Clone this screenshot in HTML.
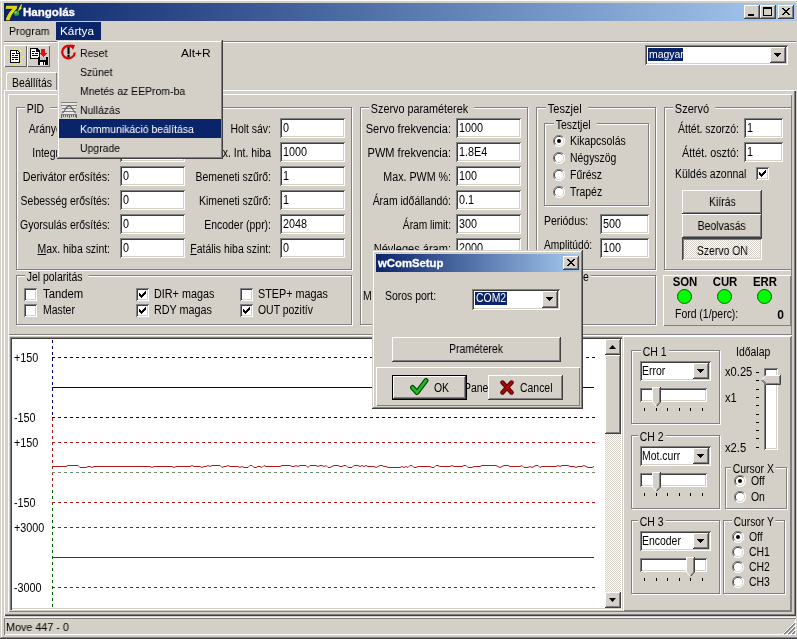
<!DOCTYPE html>
<html lang="hu"><head><meta charset="utf-8"><title>Hangolás</title>
<style>
html,body{margin:0;padding:0;}
body{width:797px;height:639px;overflow:hidden;background:#D4D0C8;position:relative;will-change:opacity;
 font-family:"Liberation Sans",sans-serif;font-size:12px;color:#000;line-height:13px;}
div,span{box-sizing:border-box;}
.a{position:absolute;}
.t{position:absolute;margin-top:1px;white-space:nowrap;height:13px;line-height:13px;font-size:12px;transform:scaleX(0.87);transform-origin:0 50%;}
.t.r{text-align:right;transform-origin:100% 50%;}
.t.c{text-align:center;transform-origin:50% 50%;}
.th{position:absolute;will-change:transform;white-space:nowrap;height:13px;line-height:13px;font-size:11px;transform:scaleX(0.95);transform-origin:0 50%;}
.b{font-weight:bold;}
.s{display:inline-block;will-change:transform;transform:scaleX(0.87);transform-origin:50% 50%;white-space:nowrap;}
.btn{background:#D4D0C8;box-shadow:inset -1px -1px #404040,inset 1px 1px #fff,inset -2px -2px #808080,inset 2px 2px #D4D0C8;text-align:center;}
.sunken{background:#fff;box-shadow:inset 1px 1px #808080,inset -1px -1px #fff,inset 2px 2px #404040,inset -2px -2px #D4D0C8;}
.edit{position:absolute;background:#fff;box-shadow:inset 1px 1px #808080,inset -1px -1px #fff,inset 2px 2px #404040,inset -2px -2px #D4D0C8;overflow:hidden;}
.edit span{position:absolute;left:3px;top:4px;height:13px;line-height:13px;white-space:nowrap;transform:scaleX(0.9);transform-origin:0 50%;}
.grp{position:absolute;border:1px solid #808080;box-shadow:1px 1px 0 #fff,inset 1px 1px 0 #fff;}
.gl{position:absolute;top:-5px;background:#D4D0C8;padding:0 7px 0 2px;white-space:nowrap;height:13px;line-height:13px;transform:scaleX(0.87);transform-origin:0 50%;}
.bevelup{box-shadow:inset 1px 1px #fff,inset -1px -1px #808080;}
.cb{position:absolute;width:13px;height:13px;background:#fff;box-shadow:inset 1px 1px #808080,inset -1px -1px #fff,inset 2px 2px #404040,inset -2px -2px #D4D0C8;}
.sel{background:#0A246A;color:#fff;}
</style></head>
<body>
<div class="a " style="left:0px;top:0px;width:797px;height:1px;background:#fff;"></div>
<div class="a " style="left:1px;top:0px;width:1px;height:638px;background:#fff;"></div>
<div class="a " style="left:0px;top:638px;width:797px;height:1px;background:#404040;"></div>
<div class="a " style="left:1px;top:637px;width:796px;height:1px;background:#808080;"></div>
<div class="a " style="left:4px;top:3px;width:792px;height:18px;background:linear-gradient(to right,#0A246A 0%,#A6CAF0 100%);"></div>
<svg class="a" style="left:4px;top:3px;will-change:transform" width="20" height="18" viewBox="4 3 20 18"><text x="4.500" y="19.500" font-family="Liberation Sans,sans-serif" font-size="21" font-weight="bold" font-style="italic" fill="#D8D818" stroke="#181800" stroke-width="2.200" paint-order="stroke" stroke-linejoin="round">7</text><text x="4.500" y="19.500" font-family="Liberation Sans,sans-serif" font-size="21" font-weight="bold" font-style="italic" fill="#D8D818" stroke="#D8D818" stroke-width="0.700">7</text><circle cx="16.500" cy="13.200" r="2.600" fill="#30A040"/><circle cx="15.800" cy="12.500" r="1" fill="#90D0A0"/><path d="M17.500 11.500l2.500-5.500 1.500-2 0.500 1-1 2.500 1 0.500-1.500 1.500z" fill="#E8E820"/></svg>
<div class="th b" style="left:23px;top:6px;transform:scaleX(1.05);color:#fff;-webkit-text-stroke:0.3px #fff;">Hangolás</div>
<div class="a btn" style="left:744px;top:5px;width:16px;height:14px;"><svg class="a" style="left:0;top:0" width="16" height="14" viewBox="0 0 16 14" shape-rendering="crispEdges"><path d="M4 9h6v2H4z" fill="#000"/></svg></div>
<div class="a btn" style="left:760px;top:5px;width:16px;height:14px;"><svg class="a" style="left:0;top:0" width="16" height="14" viewBox="0 0 16 14" shape-rendering="crispEdges"><path d="M3 2h9v9H3z M4 4v6h7V4z" fill="#000" fill-rule="evenodd"/></svg></div>
<div class="a btn" style="left:778px;top:5px;width:16px;height:14px;"><svg class="a" style="left:0;top:0" width="16" height="14" viewBox="0 0 16 14" shape-rendering="crispEdges"><path d="M4 3h2v1h1v1h2v-1h1v-1h2v1h-1v1h-1v1h-1v1h1v1h1v1h1v1h-2v-1h-1v-1h-2v1h-1v1h-2v-1h1v-1h1v-1h1v-1h-1v-1h-1v-1h-1z" fill="#000"/></svg></div>
<div class="th " style="left:9px;top:25px;transform:scaleX(0.96);">Program</div>
<div class="a sel" style="left:56px;top:22px;width:45px;height:18px;"></div>
<div class="th " style="left:60px;top:25px;transform:scaleX(1.07);color:#fff;">Kártya</div>
<div class="a " style="left:4px;top:41px;width:792px;height:1px;background:#808080;"></div>
<div class="a " style="left:4px;top:42px;width:792px;height:1px;background:#fff;"></div>
<div class="a" style="left:4px;top:45px;width:23px;height:22px;background:#D4D0C8;box-shadow:inset 1px 1px #fff,inset -1px -1px #606060;"><svg class="a" style="left:3px;top:3px" width="17" height="17" viewBox="0 0 17 17" shape-rendering="crispEdges"><path d="M2 2h2v2H2zM13 2h2v2h-2zM2 14h2v2H2zM13 14h2v2h-2zM0 8h2v2H0zM15 8h2v2h-2zM7 0h2v1H7zM7 16h2v1H7zM4 5h1v1H4zM13 11h1v1h-1z" fill="#F0F040"/><path d="M3 2h7l3 3v10H3z" fill="#000"/><path d="M4 3h5v3h3v8H4z" fill="#fff"/><path d="M10 3v2h2z" fill="#fff"/><path d="M5 5h3v1H5zM5 7h2v1H5zM8 7h3v1H8zM5 9h6v1H5zM5 11h2v1H5zM8 11h3v1H8z" fill="#000"/></svg></div>
<div class="a" style="left:27px;top:45px;width:23px;height:22px;background:#D4D0C8;box-shadow:inset 1px 1px #fff,inset -1px -1px #606060;"><svg class="a" style="left:2px;top:2px" width="20" height="19" viewBox="0 0 20 19" shape-rendering="crispEdges"><path d="M1 1h7l3 3v8H1z" fill="#000"/><path d="M2 2h5v3h3v6H2z" fill="#fff"/><path d="M3 4h3v1H3zM3 6h2v1H3zM6 6h3v1H6zM3 8h6v1H3z" fill="#000"/><path d="M12 2h4v4h2l-4 4-4-4h2z" fill="#E01010"/><path d="M9 10h10v8H9z" fill="#000"/><path d="M11 10h6v3h-6z" fill="#C0C0C0"/><path d="M11 15h5v3h-5z" fill="#fff"/><path d="M14 15h1v3h-1z" fill="#000"/></svg></div>
<div class="a sunken" style="left:645px;top:45px;width:143px;height:20px;"><div class="a sel" style="left:3px;top:3px;width:35px;height:13px;"><span class="a" style="left:1px;top:0;height:13px;line-height:13px;white-space:nowrap;font-size:11px;transform:scaleX(0.95);transform-origin:0 50%;">magyar</span></div><div class="a btn" style="left:125px;top:2px;width:16px;height:16px;"><svg class="a" style="left:4px;top:6px" width="7" height="4" viewBox="0 0 7 4" shape-rendering="crispEdges"><path d="M0 0h7v1h-1v1h-1v1h-1v1h-1v-1h-1v-1h-1v-1h-1z" fill="#000"/></svg></div></div>
<div class="a " style="left:4px;top:90px;width:792px;height:526px;box-shadow:inset 1px 1px #fff,inset -1px -1px #404040,inset -2px -2px #808080;"></div>
<div class="a " style="left:6px;top:72px;width:52px;height:18px;background:#D4D0C8;border-radius:2px 2px 0 0;box-shadow:inset 1px 1px #fff,inset -1px 0 #404040,inset -2px 0 #808080;"></div>
<div class="t " style="left:12px;top:76px;">Beállítás</div>
<div class="a bevelup" style="left:8px;top:94px;width:784px;height:241px;"></div>
<div class="a bevelup" style="left:8px;top:335px;width:784px;height:277px;"></div>
<div class="grp" style="left:16px;top:107px;width:336px;height:163px;"><span class="gl" style="left:8px;">PID</span></div>
<div class="t r" style="left:-10px;top:122px;width:120px;">Arányos erősítés:</div>
<div class="edit" style="left:120px;top:118px;width:65px;height:20px;"><span>0</span></div>
<div class="t r" style="left:-10px;top:146px;width:120px;">Integrál erősítés:</div>
<div class="edit" style="left:120px;top:142px;width:65px;height:20px;"><span>0</span></div>
<div class="t r" style="left:-10px;top:170px;width:120px;transform:scaleX(0.89);">Derivátor erősítés:</div>
<div class="edit" style="left:120px;top:166px;width:65px;height:20px;"><span>0</span></div>
<div class="t r" style="left:-10px;top:194px;width:120px;">Sebesség erősítés:</div>
<div class="edit" style="left:120px;top:190px;width:65px;height:20px;"><span>0</span></div>
<div class="t r" style="left:-10px;top:218px;width:120px;">Gyorsulás erősítés:</div>
<div class="edit" style="left:120px;top:214px;width:65px;height:20px;"><span>0</span></div>
<div class="t r" style="left:-10px;top:242px;width:120px;"><u>M</u>ax. hiba szint:</div>
<div class="edit" style="left:120px;top:238px;width:65px;height:20px;"><span>0</span></div>
<div class="t r" style="left:151px;top:122px;width:120px;">Holt sáv:</div>
<div class="edit" style="left:280px;top:118px;width:65px;height:20px;"><span>0</span></div>
<div class="t r" style="left:151px;top:146px;width:120px;">Max. Int. hiba</div>
<div class="edit" style="left:280px;top:142px;width:65px;height:20px;"><span>1000</span></div>
<div class="t r" style="left:151px;top:170px;width:120px;">Bemeneti szűrő:</div>
<div class="edit" style="left:280px;top:166px;width:65px;height:20px;"><span>1</span></div>
<div class="t r" style="left:151px;top:194px;width:120px;">Kimeneti szűrő:</div>
<div class="edit" style="left:280px;top:190px;width:65px;height:20px;"><span>1</span></div>
<div class="t r" style="left:151px;top:218px;width:120px;">Encoder (ppr):</div>
<div class="edit" style="left:280px;top:214px;width:65px;height:20px;"><span>2048</span></div>
<div class="t r" style="left:151px;top:242px;width:120px;"><u>F</u>atális hiba szint:</div>
<div class="edit" style="left:280px;top:238px;width:65px;height:20px;"><span>0</span></div>
<div class="grp" style="left:16px;top:275px;width:336px;height:50px;"><span class="gl" style="left:8px;">Jel polaritás</span></div>
<div class="cb" style="left:24px;top:288px;"></div>
<div class="t " style="left:43px;top:287px;transform:scaleX(0.94);">Tandem</div>
<div class="cb" style="left:24px;top:304px;"></div>
<div class="t " style="left:43px;top:303px;">Master</div>
<div class="cb" style="left:136px;top:288px;"><svg width="13" height="13" viewBox="0 0 13 13" style="position:absolute;left:0;top:0" shape-rendering="crispEdges"><path d="M3 5h1v1h1v1h1v-1h1v-1h1v-1h1v-1h1v3h-1v1h-1v1h-1v1h-1v1h-1v-1h-1v-1h-1z" fill="#000"/></svg></div>
<div class="t " style="left:154px;top:287px;transform:scaleX(0.9);">DIR+ magas</div>
<div class="cb" style="left:136px;top:304px;"><svg width="13" height="13" viewBox="0 0 13 13" style="position:absolute;left:0;top:0" shape-rendering="crispEdges"><path d="M3 5h1v1h1v1h1v-1h1v-1h1v-1h1v-1h1v3h-1v1h-1v1h-1v1h-1v1h-1v-1h-1v-1h-1z" fill="#000"/></svg></div>
<div class="t " style="left:154px;top:303px;transform:scaleX(0.9);">RDY magas</div>
<div class="cb" style="left:240px;top:288px;"></div>
<div class="t " style="left:258px;top:287px;transform:scaleX(0.9);">STEP+ magas</div>
<div class="cb" style="left:240px;top:304px;"><svg width="13" height="13" viewBox="0 0 13 13" style="position:absolute;left:0;top:0" shape-rendering="crispEdges"><path d="M3 5h1v1h1v1h1v-1h1v-1h1v-1h1v-1h1v3h-1v1h-1v1h-1v1h-1v1h-1v-1h-1v-1h-1z" fill="#000"/></svg></div>
<div class="t " style="left:258px;top:303px;">OUT pozitív</div>
<div class="grp" style="left:360px;top:107px;width:168px;height:218px;"><span class="gl" style="left:8px;transform:scaleX(0.9);">Szervo paraméterek</span></div>
<div class="t r" style="left:331px;top:122px;width:120px;transform:scaleX(0.92);">Servo frekvencia:</div>
<div class="edit" style="left:456px;top:118px;width:65px;height:20px;"><span>1000</span></div>
<div class="t r" style="left:331px;top:146px;width:120px;transform:scaleX(0.92);">PWM frekvencia:</div>
<div class="edit" style="left:456px;top:142px;width:65px;height:20px;"><span>1.8E4</span></div>
<div class="t r" style="left:331px;top:170px;width:120px;transform:scaleX(0.89);">Max. PWM %:</div>
<div class="edit" style="left:456px;top:166px;width:65px;height:20px;"><span>100</span></div>
<div class="t r" style="left:331px;top:194px;width:120px;transform:scaleX(0.87);">Áram időállandó:</div>
<div class="edit" style="left:456px;top:190px;width:65px;height:20px;"><span>0.1</span></div>
<div class="t r" style="left:331px;top:218px;width:120px;transform:scaleX(0.85);">Áram limit:</div>
<div class="edit" style="left:456px;top:214px;width:65px;height:20px;"><span>300</span></div>
<div class="t r" style="left:331px;top:242px;width:120px;transform:scaleX(0.92);">Névleges áram:</div>
<div class="edit" style="left:456px;top:238px;width:65px;height:20px;"><span>2000</span></div>
<div class="t " style="left:363px;top:289px;">M</div>
<div class="grp" style="left:536px;top:107px;width:120px;height:163px;"><span class="gl" style="left:9px;transform:scaleX(0.92);">Teszjel</span></div>
<div class="grp" style="left:544px;top:123px;width:105px;height:83px;"><span class="gl" style="left:9px;">Tesztjel</span></div>
<svg class="a" style="left:553px;top:135px;" width="12" height="12" viewBox="0 0 12 12"><circle cx="6" cy="6" r="5.5" fill="#fff"/><path d="M10 2A5.5 5.500 0 0 0 2 10" fill="none" stroke="#808080" stroke-width="1"/><path d="M9.3 2.700A4.500 4.500 0 0 0 2.700 9.300" fill="none" stroke="#404040" stroke-width="1"/><path d="M10 2A5.500 5.500 0 0 1 2 10" fill="none" stroke="#fff" stroke-width="1"/><path d="M9.300 2.700A4.500 4.500 0 0 1 2.700 9.300" fill="none" stroke="#D4D0C8" stroke-width="1"/><circle cx="6" cy="6" r="2" fill="#000"/></svg>
<div class="t " style="left:570px;top:134px;">Kikapcsolás</div>
<svg class="a" style="left:553px;top:152px;" width="12" height="12" viewBox="0 0 12 12"><circle cx="6" cy="6" r="5.5" fill="#fff"/><path d="M10 2A5.5 5.500 0 0 0 2 10" fill="none" stroke="#808080" stroke-width="1"/><path d="M9.3 2.700A4.500 4.500 0 0 0 2.700 9.300" fill="none" stroke="#404040" stroke-width="1"/><path d="M10 2A5.500 5.500 0 0 1 2 10" fill="none" stroke="#fff" stroke-width="1"/><path d="M9.300 2.700A4.500 4.500 0 0 1 2.700 9.300" fill="none" stroke="#D4D0C8" stroke-width="1"/></svg>
<div class="t " style="left:570px;top:151px;">Négyszög</div>
<svg class="a" style="left:553px;top:169px;" width="12" height="12" viewBox="0 0 12 12"><circle cx="6" cy="6" r="5.5" fill="#fff"/><path d="M10 2A5.5 5.500 0 0 0 2 10" fill="none" stroke="#808080" stroke-width="1"/><path d="M9.3 2.700A4.500 4.500 0 0 0 2.700 9.300" fill="none" stroke="#404040" stroke-width="1"/><path d="M10 2A5.500 5.500 0 0 1 2 10" fill="none" stroke="#fff" stroke-width="1"/><path d="M9.300 2.700A4.500 4.500 0 0 1 2.700 9.300" fill="none" stroke="#D4D0C8" stroke-width="1"/></svg>
<div class="t " style="left:570px;top:168px;">Fűrész</div>
<svg class="a" style="left:553px;top:186px;" width="12" height="12" viewBox="0 0 12 12"><circle cx="6" cy="6" r="5.5" fill="#fff"/><path d="M10 2A5.5 5.500 0 0 0 2 10" fill="none" stroke="#808080" stroke-width="1"/><path d="M9.3 2.700A4.500 4.500 0 0 0 2.700 9.300" fill="none" stroke="#404040" stroke-width="1"/><path d="M10 2A5.500 5.500 0 0 1 2 10" fill="none" stroke="#fff" stroke-width="1"/><path d="M9.300 2.700A4.500 4.500 0 0 1 2.700 9.300" fill="none" stroke="#D4D0C8" stroke-width="1"/></svg>
<div class="t " style="left:570px;top:185px;">Trapéz</div>
<div class="t " style="left:544px;top:214px;">Periódus:</div>
<div class="edit" style="left:600px;top:214px;width:49px;height:20px;"><span>500</span></div>
<div class="t " style="left:544px;top:238px;transform:scaleX(0.85);">Amplitúdó:</div>
<div class="edit" style="left:600px;top:238px;width:49px;height:20px;"><span>100</span></div>
<div class="grp" style="left:536px;top:275px;width:120px;height:50px;"><span class="gl" style="left:17px;padding-right:2px;">Üzeme</span></div>
<div class="a " style="left:664px;top:100px;width:127px;height:175px;overflow:hidden;"><div class="grp" style="left:0;top:7px;width:140px;height:163px;"><span class="gl" style="left:8px;transform:scaleX(0.92);">Szervó</span></div></div>
<div class="t r" style="left:619px;top:122px;width:120px;">Áttét. szorzó:</div>
<div class="edit" style="left:744px;top:118px;width:39px;height:20px;"><span>1</span></div>
<div class="t r" style="left:619px;top:146px;width:120px;transform:scaleX(0.9);">Áttét. osztó:</div>
<div class="edit" style="left:744px;top:142px;width:39px;height:20px;"><span>1</span></div>
<div class="t " style="left:675px;top:167px;">Küldés azonnal</div>
<div class="cb" style="left:756px;top:167px;"><svg width="13" height="13" viewBox="0 0 13 13" style="position:absolute;left:0;top:0" shape-rendering="crispEdges"><path d="M3 5h1v1h1v1h1v-1h1v-1h1v-1h1v-1h1v3h-1v1h-1v1h-1v1h-1v1h-1v-1h-1v-1h-1z" fill="#000"/></svg></div>
<div class="a btn" style="left:682px;top:190px;width:80px;height:24px;line-height:24px;"><span class="s">Kiírás</span></div>
<div class="a btn" style="left:682px;top:214px;width:80px;height:24px;line-height:24px;"><span class="s">Beolvasás</span></div>
<div class="a " style="left:682px;top:238px;width:80px;height:22px;line-height:26px;text-align:center;background:repeating-conic-gradient(#fff 0 25%,#D4D0C8 0 50%) 0 0/2px 2px;box-shadow:inset 1px 1px #404040,inset -1px -1px #fff,inset 2px 2px #808080,inset -2px -2px #D4D0C8;"><span class="s">Szervo ON</span></div>
<div class="a bevelup" style="left:663px;top:275px;width:128px;height:51px;"></div>
<div class="t c b" style="left:665px;top:275px;width:40px;transform:scaleX(0.95);">SON</div>
<svg class="a" style="left:677px;top:289px" width="16" height="16" viewBox="0 0 16 16"><circle cx="7.500" cy="7.500" r="7" fill="#00FF00" stroke="#006000" stroke-width="1"/></svg>
<div class="t c b" style="left:705px;top:275px;width:40px;transform:scaleX(0.95);">CUR</div>
<svg class="a" style="left:717px;top:289px" width="16" height="16" viewBox="0 0 16 16"><circle cx="7.500" cy="7.500" r="7" fill="#00FF00" stroke="#006000" stroke-width="1"/></svg>
<div class="t c b" style="left:745px;top:275px;width:40px;transform:scaleX(0.95);">ERR</div>
<svg class="a" style="left:757px;top:289px" width="16" height="16" viewBox="0 0 16 16"><circle cx="7.500" cy="7.500" r="7" fill="#00FF00" stroke="#006000" stroke-width="1"/></svg>
<div class="t " style="left:675px;top:307px;">Ford (1/perc):</div>
<div class="t r b" style="left:760px;top:308px;width:24px;transform:scaleX(1);">0</div>
<div class="a " style="left:10px;top:337px;width:612px;height:273px;background:#fff;box-shadow:inset 1px 1px #808080,inset 2px 2px #404040,inset -1px -1px #fff,inset -2px -2px #D4D0C8;"></div>
<svg class="a" style="left:12px;top:339px" width="593" height="269" viewBox="12 339 593 269" shape-rendering="crispEdges"><line x1="52.500" y1="340" x2="52.500" y2="418" stroke="#000080" stroke-dasharray="3 3"/><line x1="52.500" y1="418" x2="52.500" y2="490" stroke="#B01818" stroke-dasharray="3 3"/><line x1="52.500" y1="490" x2="52.500" y2="608" stroke="#006400" stroke-dasharray="3 3"/><line x1="52" y1="357.5" x2="596" y2="357.5" stroke="#000080" stroke-dasharray="3 3"/><line x1="52" y1="387.5" x2="594" y2="387.5" stroke="#000080"/><line x1="52" y1="417.5" x2="596" y2="417.5" stroke="#000080" stroke-dasharray="3 3"/><line x1="52" y1="442.5" x2="596" y2="442.5" stroke="#B01818" stroke-dasharray="3 3"/><line x1="52" y1="472.5" x2="596" y2="472.5" stroke="#708870" stroke-dasharray="3 3"/><line x1="52" y1="502.5" x2="596" y2="502.5" stroke="#B01818" stroke-dasharray="3 3"/><polyline points="52,466.5 54,466.5 56,466.5 58,466.5 60,466.5 62,466.5 64,466.5 66,466.5 68,465.5 70,465.5 72,465.5 74,465.5 76,465.5 78,465.5 80,467.5 82,467.5 84,467.5 86,467.5 88,466.5 90,466.5 92,467.5 94,466.5 96,466.5 98,466.5 100,466.5 102,466.5 104,466.5 106,466.5 108,466.5 110,466.5 112,466.5 114,466.5 116,466.5 118,466.5 120,466.5 122,466.5 124,466.5 126,466.5 128,466.5 130,466.5 132,466.5 134,466.5 136,466.5 138,466.5 140,466.5 142,466.5 144,466.5 146,466.5 148,466.5 150,466.5 152,467.5 154,466.5 156,466.5 158,466.5 160,466.5 162,466.5 164,466.5 166,466.5 168,466.5 170,466.5 172,466.5 174,467.5 176,466.5 178,466.5 180,466.5 182,466.5 184,466.5 186,466.5 188,466.5 190,466.5 192,465.5 194,466.5 196,466.5 198,466.5 200,466.5 202,467.5 204,466.5 206,466.5 208,465.5 210,466.5 212,465.5 214,465.5 216,465.5 218,465.5 220,465.5 222,467.5 224,466.5 226,466.5 228,465.5 230,466.5 232,466.5 234,466.5 236,466.5 238,466.5 240,467.5 242,466.5 244,467.5 246,467.5 248,467.5 250,465.5 252,465.5 254,467.5 256,467.5 258,466.5 260,466.5 262,467.5 264,465.5 266,466.5 268,466.5 270,466.5 272,466.5 274,466.5 276,466.5 278,466.5 280,466.5 282,465.5 284,465.5 286,465.5 288,465.5 290,465.5 292,466.5 294,466.5 296,465.5 298,466.5 300,465.5 302,465.5 304,465.5 306,465.5 308,467.5 310,465.5 312,465.5 314,465.5 316,465.5 318,466.5 320,465.5 322,465.5 324,466.5 326,465.5 328,467.5 330,467.5 332,466.5 334,465.5 336,465.5 338,465.5 340,466.5 342,466.5 344,465.5 346,465.5 348,467.5 350,467.5 352,467.5 354,465.5 356,465.5 358,465.5 360,466.5 362,465.5 364,466.5 366,465.5 368,466.5 370,466.5 372,466.5 374,466.5 376,467.5 378,466.5 380,465.5 382,465.5 384,466.5 386,466.5 388,467.5 390,467.5 392,467.5 394,467.5 396,467.5 398,467.5 400,467.5 402,466.5 404,467.5 406,466.5 408,467.5 410,465.5 412,465.5 414,467.5 416,467.5 418,466.5 420,466.5 422,466.5 424,466.5 426,466.5 428,466.5 430,466.5 432,467.5 434,467.5 436,465.5 438,465.5 440,466.5 442,466.5 444,466.5 446,466.5 448,466.5 450,466.5 452,465.5 454,466.5 456,466.5 458,466.5 460,466.5 462,466.5 464,465.5 466,465.5 468,467.5 470,467.5 472,467.5 474,466.5 476,466.5 478,466.5 480,466.5 482,465.5 484,465.5 486,465.5 488,465.5 490,465.5 492,465.5 494,465.5 496,465.5 498,466.5 500,467.5 502,466.5 504,465.5 506,465.5 508,465.5 510,466.5 512,466.5 514,466.5 516,466.5 518,466.5 520,466.5 522,465.5 524,467.5 526,467.5 528,467.5 530,466.5 532,467.5 534,466.5 536,465.5 538,465.5 540,467.5 542,466.5 544,466.5 546,466.5 548,466.5 550,466.5 552,466.5 554,466.5 556,466.5 558,465.5 560,466.5 562,465.5 564,465.5 566,465.5 568,465.5 570,466.5 572,466.5 574,466.5 576,467.5 578,466.5 580,466.5 582,466.5 584,465.5 586,466.5 588,467.5 590,467.5 592,467.5 594,466.5" fill="none" stroke="#B01818" shape-rendering="auto"/><line x1="52" y1="527.5" x2="596" y2="527.5" stroke="#006400" stroke-dasharray="3 3"/><line x1="52" y1="557.5" x2="594" y2="557.5" stroke="#006400"/><line x1="52" y1="587.5" x2="596" y2="587.5" stroke="#006400" stroke-dasharray="3 3"/></svg>
<div class="t " style="left:14px;top:351px;transform:scaleX(0.9);">+150</div>
<div class="t " style="left:14px;top:411px;transform:scaleX(0.9);">-150</div>
<div class="t " style="left:14px;top:436px;transform:scaleX(0.9);">+150</div>
<div class="t " style="left:14px;top:496px;transform:scaleX(0.9);">-150</div>
<div class="t " style="left:14px;top:521px;transform:scaleX(0.9);">+3000</div>
<div class="t " style="left:14px;top:581px;transform:scaleX(0.9);">-3000</div>
<div class="a " style="left:605px;top:339px;width:16px;height:269px;background:repeating-conic-gradient(#fff 0 25%,#D4D0C8 0 50%) 0 0/2px 2px;"></div>
<div class="a btn" style="left:605px;top:339px;width:16px;height:16px;"><svg class="a" style="left:4px;top:6px" width="7" height="4" viewBox="0 0 7 4"><path d="M0 4h7L3.500 0z" fill="#000"/></svg></div>
<div class="a btn" style="left:605px;top:355px;width:16px;height:79px;"></div>
<div class="a btn" style="left:605px;top:592px;width:16px;height:16px;"><svg class="a" style="left:4px;top:6px" width="7" height="4" viewBox="0 0 7 4"><path d="M0 0h7L3.500 4z" fill="#000"/></svg></div>
<div class="a bevelup" style="left:623px;top:336px;width:168px;height:275px;"></div>
<div class="grp" style="left:631px;top:350px;width:89px;height:74px;"><span class="gl" style="left:9px;padding-right:3px;">CH 1</span></div>
<div class="a sunken" style="left:640px;top:361px;width:71px;height:20px;"><div class="a" style="left:2px;top:3px;height:14px;line-height:14px;white-space:nowrap;transform:scaleX(0.87);transform-origin:0 50%;">Error</div><div class="a btn" style="left:53px;top:2px;width:16px;height:16px;"><svg class="a" style="left:4px;top:6px" width="7" height="4" viewBox="0 0 7 4" shape-rendering="crispEdges"><path d="M0 0h7v1h-1v1h-1v1h-1v1h-1v-1h-1v-1h-1v-1h-1z" fill="#000"/></svg></div></div>
<div class="a " style="left:640px;top:388px;width:67px;height:14px;background:#fff;box-shadow:inset 1px 1px #808080,inset -1px -1px #fff,inset 2px 2px #404040,inset -2px -2px #D4D0C8;"></div>
<svg class="a" style="left:652px;top:387px" width="9" height="20" viewBox="0 0 9 20"><path d="M0 0h9v15l-4.500 5L0 15z" fill="#D4D0C8"/><path d="M0.500 15V0.500H8" fill="none" stroke="#fff"/><path d="M8.500 0v15l-4 4.500" fill="none" stroke="#404040"/><path d="M7.500 1v14l-3 3.500" fill="none" stroke="#808080"/><path d="M0.500 15l4 4.500" fill="none" stroke="#fff"/></svg>
<div class="a " style="left:644px;top:408px;width:1px;height:3px;background:#000;"></div>
<div class="a " style="left:656px;top:408px;width:1px;height:3px;background:#000;"></div>
<div class="a " style="left:667px;top:408px;width:1px;height:3px;background:#000;"></div>
<div class="a " style="left:679px;top:408px;width:1px;height:3px;background:#000;"></div>
<div class="a " style="left:690px;top:408px;width:1px;height:3px;background:#000;"></div>
<div class="a " style="left:702px;top:408px;width:1px;height:3px;background:#000;"></div>
<div class="grp" style="left:631px;top:435px;width:89px;height:74px;"><span class="gl" style="left:6px;padding-right:3px;">CH 2</span></div>
<div class="a sunken" style="left:640px;top:446px;width:71px;height:20px;"><div class="a" style="left:2px;top:3px;height:14px;line-height:14px;white-space:nowrap;transform:scaleX(0.87);transform-origin:0 50%;">Mot.curr</div><div class="a btn" style="left:53px;top:2px;width:16px;height:16px;"><svg class="a" style="left:4px;top:6px" width="7" height="4" viewBox="0 0 7 4" shape-rendering="crispEdges"><path d="M0 0h7v1h-1v1h-1v1h-1v1h-1v-1h-1v-1h-1v-1h-1z" fill="#000"/></svg></div></div>
<div class="a " style="left:640px;top:473px;width:67px;height:14px;background:#fff;box-shadow:inset 1px 1px #808080,inset -1px -1px #fff,inset 2px 2px #404040,inset -2px -2px #D4D0C8;"></div>
<svg class="a" style="left:652px;top:472px" width="9" height="20" viewBox="0 0 9 20"><path d="M0 0h9v15l-4.500 5L0 15z" fill="#D4D0C8"/><path d="M0.500 15V0.500H8" fill="none" stroke="#fff"/><path d="M8.500 0v15l-4 4.500" fill="none" stroke="#404040"/><path d="M7.500 1v14l-3 3.500" fill="none" stroke="#808080"/><path d="M0.500 15l4 4.500" fill="none" stroke="#fff"/></svg>
<div class="a " style="left:644px;top:493px;width:1px;height:3px;background:#000;"></div>
<div class="a " style="left:656px;top:493px;width:1px;height:3px;background:#000;"></div>
<div class="a " style="left:667px;top:493px;width:1px;height:3px;background:#000;"></div>
<div class="a " style="left:679px;top:493px;width:1px;height:3px;background:#000;"></div>
<div class="a " style="left:690px;top:493px;width:1px;height:3px;background:#000;"></div>
<div class="a " style="left:702px;top:493px;width:1px;height:3px;background:#000;"></div>
<div class="grp" style="left:631px;top:520px;width:89px;height:74px;"><span class="gl" style="left:6px;padding-right:3px;">CH 3</span></div>
<div class="a sunken" style="left:640px;top:531px;width:71px;height:20px;"><div class="a" style="left:2px;top:3px;height:14px;line-height:14px;white-space:nowrap;transform:scaleX(0.87);transform-origin:0 50%;">Encoder</div><div class="a btn" style="left:53px;top:2px;width:16px;height:16px;"><svg class="a" style="left:4px;top:6px" width="7" height="4" viewBox="0 0 7 4" shape-rendering="crispEdges"><path d="M0 0h7v1h-1v1h-1v1h-1v1h-1v-1h-1v-1h-1v-1h-1z" fill="#000"/></svg></div></div>
<div class="a " style="left:640px;top:558px;width:67px;height:14px;background:#fff;box-shadow:inset 1px 1px #808080,inset -1px -1px #fff,inset 2px 2px #404040,inset -2px -2px #D4D0C8;"></div>
<svg class="a" style="left:686px;top:557px" width="9" height="20" viewBox="0 0 9 20"><path d="M0 0h9v15l-4.500 5L0 15z" fill="#D4D0C8"/><path d="M0.500 15V0.500H8" fill="none" stroke="#fff"/><path d="M8.500 0v15l-4 4.500" fill="none" stroke="#404040"/><path d="M7.500 1v14l-3 3.500" fill="none" stroke="#808080"/><path d="M0.500 15l4 4.500" fill="none" stroke="#fff"/></svg>
<div class="a " style="left:644px;top:578px;width:1px;height:3px;background:#000;"></div>
<div class="a " style="left:656px;top:578px;width:1px;height:3px;background:#000;"></div>
<div class="a " style="left:667px;top:578px;width:1px;height:3px;background:#000;"></div>
<div class="a " style="left:679px;top:578px;width:1px;height:3px;background:#000;"></div>
<div class="a " style="left:690px;top:578px;width:1px;height:3px;background:#000;"></div>
<div class="a " style="left:702px;top:578px;width:1px;height:3px;background:#000;"></div>
<div class="t " style="left:736px;top:345px;">Időalap</div>
<div class="t " style="left:725px;top:365px;transform:scaleX(0.93);">x0.25</div>
<div class="t " style="left:725px;top:391px;transform:scaleX(0.93);">x1</div>
<div class="t " style="left:725px;top:441px;transform:scaleX(0.93);">x2.5</div>
<div class="a " style="left:764px;top:368px;width:14px;height:82px;background:#fff;box-shadow:inset 1px 1px #808080,inset -1px -1px #fff,inset 2px 2px #404040,inset -2px -2px #D4D0C8;"></div>
<svg class="a" style="left:761px;top:375px" width="20" height="10" viewBox="0 0 20 10"><path d="M5 0h15v10H5L0 5z" fill="#D4D0C8"/><path d="M19.500 0.500H5L0.500 5" fill="none" stroke="#fff"/><path d="M19.500 0v9.500H5L0.500 5" fill="none" stroke="#404040"/><path d="M18.500 1v7.500H5.500L1.500 5" fill="none" stroke="#808080"/></svg>
<div class="a " style="left:756px;top:372px;width:3px;height:1px;background:#000;"></div>
<div class="a " style="left:756px;top:380px;width:3px;height:1px;background:#000;"></div>
<div class="a " style="left:756px;top:389px;width:3px;height:1px;background:#000;"></div>
<div class="a " style="left:756px;top:397px;width:3px;height:1px;background:#000;"></div>
<div class="a " style="left:756px;top:405px;width:3px;height:1px;background:#000;"></div>
<div class="a " style="left:756px;top:414px;width:3px;height:1px;background:#000;"></div>
<div class="a " style="left:756px;top:422px;width:3px;height:1px;background:#000;"></div>
<div class="a " style="left:756px;top:430px;width:3px;height:1px;background:#000;"></div>
<div class="a " style="left:756px;top:438px;width:3px;height:1px;background:#000;"></div>
<div class="a " style="left:756px;top:447px;width:3px;height:1px;background:#000;"></div>
<div class="grp" style="left:725px;top:467px;width:62px;height:42px;"><span class="gl" style="left:5px;padding-right:2px;">Cursor X</span></div>
<svg class="a" style="left:734px;top:475px;" width="12" height="12" viewBox="0 0 12 12"><circle cx="6" cy="6" r="5.5" fill="#fff"/><path d="M10 2A5.5 5.500 0 0 0 2 10" fill="none" stroke="#808080" stroke-width="1"/><path d="M9.3 2.700A4.500 4.500 0 0 0 2.700 9.300" fill="none" stroke="#404040" stroke-width="1"/><path d="M10 2A5.500 5.500 0 0 1 2 10" fill="none" stroke="#fff" stroke-width="1"/><path d="M9.300 2.700A4.500 4.500 0 0 1 2.700 9.300" fill="none" stroke="#D4D0C8" stroke-width="1"/><circle cx="6" cy="6" r="2" fill="#000"/></svg>
<div class="t " style="left:751px;top:474px;">Off</div>
<svg class="a" style="left:734px;top:491px;" width="12" height="12" viewBox="0 0 12 12"><circle cx="6" cy="6" r="5.5" fill="#fff"/><path d="M10 2A5.5 5.500 0 0 0 2 10" fill="none" stroke="#808080" stroke-width="1"/><path d="M9.3 2.700A4.500 4.500 0 0 0 2.700 9.300" fill="none" stroke="#404040" stroke-width="1"/><path d="M10 2A5.500 5.500 0 0 1 2 10" fill="none" stroke="#fff" stroke-width="1"/><path d="M9.300 2.700A4.500 4.500 0 0 1 2.700 9.300" fill="none" stroke="#D4D0C8" stroke-width="1"/></svg>
<div class="t " style="left:751px;top:490px;">On</div>
<div class="grp" style="left:723px;top:520px;width:62px;height:74px;"><span class="gl" style="left:8px;transform:scaleX(0.85);padding-right:2px;">Cursor Y</span></div>
<svg class="a" style="left:732px;top:531px;" width="12" height="12" viewBox="0 0 12 12"><circle cx="6" cy="6" r="5.5" fill="#fff"/><path d="M10 2A5.5 5.500 0 0 0 2 10" fill="none" stroke="#808080" stroke-width="1"/><path d="M9.3 2.700A4.500 4.500 0 0 0 2.700 9.300" fill="none" stroke="#404040" stroke-width="1"/><path d="M10 2A5.500 5.500 0 0 1 2 10" fill="none" stroke="#fff" stroke-width="1"/><path d="M9.300 2.700A4.500 4.500 0 0 1 2.700 9.300" fill="none" stroke="#D4D0C8" stroke-width="1"/><circle cx="6" cy="6" r="2" fill="#000"/></svg>
<div class="t " style="left:749px;top:530px;">Off</div>
<svg class="a" style="left:732px;top:546px;" width="12" height="12" viewBox="0 0 12 12"><circle cx="6" cy="6" r="5.5" fill="#fff"/><path d="M10 2A5.5 5.500 0 0 0 2 10" fill="none" stroke="#808080" stroke-width="1"/><path d="M9.3 2.700A4.500 4.500 0 0 0 2.700 9.300" fill="none" stroke="#404040" stroke-width="1"/><path d="M10 2A5.500 5.500 0 0 1 2 10" fill="none" stroke="#fff" stroke-width="1"/><path d="M9.300 2.700A4.500 4.500 0 0 1 2.700 9.300" fill="none" stroke="#D4D0C8" stroke-width="1"/></svg>
<div class="t " style="left:749px;top:545px;">CH1</div>
<svg class="a" style="left:732px;top:561px;" width="12" height="12" viewBox="0 0 12 12"><circle cx="6" cy="6" r="5.5" fill="#fff"/><path d="M10 2A5.5 5.500 0 0 0 2 10" fill="none" stroke="#808080" stroke-width="1"/><path d="M9.3 2.700A4.500 4.500 0 0 0 2.700 9.300" fill="none" stroke="#404040" stroke-width="1"/><path d="M10 2A5.500 5.500 0 0 1 2 10" fill="none" stroke="#fff" stroke-width="1"/><path d="M9.300 2.700A4.500 4.500 0 0 1 2.700 9.300" fill="none" stroke="#D4D0C8" stroke-width="1"/></svg>
<div class="t " style="left:749px;top:560px;">CH2</div>
<svg class="a" style="left:732px;top:576px;" width="12" height="12" viewBox="0 0 12 12"><circle cx="6" cy="6" r="5.5" fill="#fff"/><path d="M10 2A5.5 5.500 0 0 0 2 10" fill="none" stroke="#808080" stroke-width="1"/><path d="M9.3 2.700A4.500 4.500 0 0 0 2.700 9.300" fill="none" stroke="#404040" stroke-width="1"/><path d="M10 2A5.500 5.500 0 0 1 2 10" fill="none" stroke="#fff" stroke-width="1"/><path d="M9.300 2.700A4.500 4.500 0 0 1 2.700 9.300" fill="none" stroke="#D4D0C8" stroke-width="1"/></svg>
<div class="t " style="left:749px;top:575px;">CH3</div>
<div class="a " style="left:4px;top:617px;width:792px;height:1px;background:#F4F2EE;"></div>
<div class="a " style="left:4px;top:618px;width:792px;height:17px;box-shadow:inset 1px 1px #808080,inset -1px -1px #fff;"></div>
<div class="th " style="left:6px;top:621px;transform:scaleX(0.98);">Move 447 - 0</div>
<svg class="a" style="left:783px;top:622px" width="13" height="13" viewBox="0 0 13 13"><path d="M12 1L1 12M12 5L5 12M12 9L9 12" stroke="#808080" stroke-width="2"/><path d="M12 0L0 12M12 4L4 12M12 8L8 12" stroke="#fff" stroke-width="1"/></svg>
<div class="a " style="left:57px;top:40px;width:166px;height:119px;background:#D4D0C8;box-shadow:inset -1px -1px #404040,inset 1px 1px #D4D0C8,inset -2px -2px #808080,inset 2px 2px #fff;"></div>
<div class="th " style="left:80px;top:47px;">Reset</div>
<div class="th " style="left:80px;top:66px;">Szünet</div>
<div class="th " style="left:80px;top:85px;">Mnetés az EEProm-ba</div>
<div class="th " style="left:80px;top:104px;">Nullázás</div>
<div class="a sel" style="left:59px;top:119px;width:162px;height:19px;"></div>
<div class="th " style="left:80px;top:123px;color:#fff;">Kommunikáció beálítása</div>
<div class="th " style="left:80px;top:142px;">Upgrade</div>
<div class="th " style="left:181px;top:47px;transform:scaleX(1.09);">Alt+R</div>
<svg class="a" style="left:60px;top:44px;will-change:transform" width="17" height="17" viewBox="0 0 17 17"><path d="M12.500 3.200A6.300 6.300 0 1 0 14.800 8.500" fill="none" stroke="#E00000" stroke-width="2.200"/><path d="M9.500 0.500l5.500 0.500-2 5z" fill="#E00000"/><text x="8.500" y="13" text-anchor="middle" font-family="Liberation Sans,sans-serif" font-size="14" font-weight="bold" fill="#000" stroke="#000" stroke-width="0.300">!</text></svg>
<svg class="a" style="left:61px;top:101px" width="16" height="17" viewBox="0 0 16 17"><path d="M1 1h14v12H1z" fill="#E8E8E8"/><path d="M0 1.500h16M0 4.500h16M1 7.500h14M1 10.500h14M0 13.500h16" stroke="#808080"/><path d="M1 12C4 12 4 5 8 5s4 7 7 7" fill="none" stroke="#606060" stroke-width="1.100"/><path d="M0.500 14v3M2.500 14v2M4.500 14v2M6.500 14v2M8.500 14v3M10.500 14v2M12.500 14v2M14.500 14v2M15.500 14v3" stroke="#606060" stroke-width="1"/></svg>
<div class="a " style="left:372px;top:250px;width:211px;height:159px;background:#D4D0C8;box-shadow:inset -1px -1px #404040,inset 1px 1px #D4D0C8,inset -2px -2px #808080,inset 2px 2px #fff;"></div>
<div class="a " style="left:376px;top:254px;width:204px;height:18px;background:linear-gradient(to right,#0A246A 0%,#A6CAF0 100%);"></div>
<div class="th b" style="left:378px;top:257px;transform:scaleX(1.03);color:#fff;-webkit-text-stroke:0.3px #fff;">wComSetup</div>
<div class="a btn" style="left:563px;top:256px;width:16px;height:14px;"><svg class="a" style="left:0;top:0" width="16" height="14" viewBox="0 0 16 14" shape-rendering="crispEdges"><path d="M4 3h2v1h1v1h2v-1h1v-1h2v1h-1v1h-1v1h-1v1h1v1h1v1h1v1h-2v-1h-1v-1h-2v1h-1v1h-2v-1h1v-1h1v-1h1v-1h-1v-1h-1v-1h-1z" fill="#000"/></svg></div>
<div class="t " style="left:385px;top:289px;">Soros port:</div>
<div class="a sunken" style="left:472px;top:289px;width:88px;height:21px;"><div class="a sel" style="left:3px;top:3px;width:32px;height:13px;"><span class="a" style="left:1px;top:0;height:13px;line-height:13px;white-space:nowrap;transform:scaleX(0.87);transform-origin:0 50%;">COM2</span></div><div class="a btn" style="left:70px;top:2px;width:16px;height:17px;"><svg class="a" style="left:4px;top:6px" width="7" height="4" viewBox="0 0 7 4" shape-rendering="crispEdges"><path d="M0 0h7v1h-1v1h-1v1h-1v1h-1v-1h-1v-1h-1v-1h-1z" fill="#000"/></svg></div></div>
<div class="a btn" style="left:392px;top:337px;width:169px;height:25px;line-height:25px;"><span class="s">Praméterek</span></div>
<div class="a bevelup" style="left:376px;top:367px;width:204px;height:39px;"></div>
<div class="t " style="left:464px;top:381px;">Panel</div>
<div class="a " style="left:392px;top:375px;width:75px;height:25px;background:#D4D0C8;border:1px solid #000;box-shadow:inset -1px -1px #404040,inset 1px 1px #fff,inset -2px -2px #808080,inset 2px 2px #D4D0C8;"></div>
<svg class="a" style="left:410px;top:378px" width="19" height="18" viewBox="0 0 19 18"><path d="M2.500 9.500l4.500 5L16 2.500" fill="none" stroke="#004800" stroke-width="5" stroke-linejoin="round" stroke-linecap="round"/><path d="M2.500 9.500l4.500 5L16 2.500" fill="none" stroke="#28B428" stroke-width="2.800" stroke-linejoin="round" stroke-linecap="round"/></svg>
<div class="t " style="left:434px;top:381px;">OK</div>
<div class="a btn" style="left:488px;top:375px;width:75px;height:25px;"></div>
<svg class="a" style="left:499px;top:379px" width="17" height="17" viewBox="0 0 17 17"><path d="M3.500 3.500l9 10M12.500 3.500L3.500 13.500" fill="none" stroke="#500000" stroke-width="4.400" stroke-linecap="round"/><path d="M3.500 3.500l9 10M12.500 3.500L3.500 13.500" fill="none" stroke="#A80808" stroke-width="2.600" stroke-linecap="round"/></svg>
<div class="t " style="left:520px;top:381px;">Cancel</div>
</body></html>
